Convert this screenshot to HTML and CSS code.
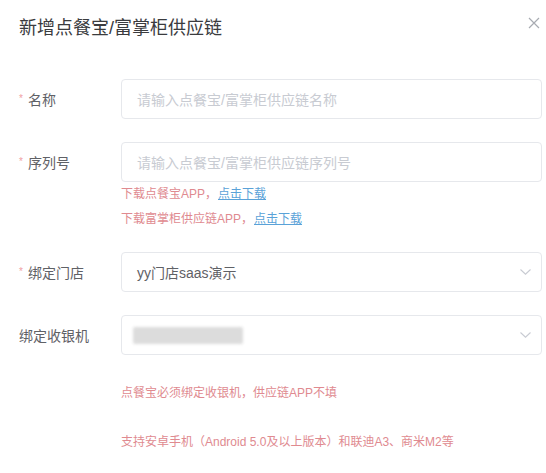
FILE: index.html
```html
<!DOCTYPE html>
<html lang="zh-CN">
<head>
<meta charset="utf-8">
<title>新增点餐宝/富掌柜供应链</title>
<link rel="stylesheet" href="styles.css">
</head>
<body>
<div class="dialog">
  <div class="header">
    <span class="title">新增点餐宝/富掌柜供应链</span>
    <button class="close" aria-label="关闭">
      <svg width="12" height="12" viewBox="0 0 12 12"><path d="M1 1L11 11M11 1L1 11" stroke="#a8abb2" stroke-width="1.2" fill="none"/></svg>
    </button>
  </div>
  <div class="form">
    <div class="row r1">
      <label class="label"><span class="req">*</span>名称</label>
      <div class="input"><span class="ph">请输入点餐宝/富掌柜供应链名称</span></div>
    </div>
    <div class="row r2">
      <label class="label"><span class="req">*</span>序列号</label>
      <div class="input"><span class="ph">请输入点餐宝/富掌柜供应链序列号</span></div>
    </div>
    <div class="help">
      <div>下载点餐宝APP，<a class="link" href="#">点击下载</a></div>
      <div>下载富掌柜供应链APP，<a class="link" href="#">点击下载</a></div>
    </div>
    <div class="row r3">
      <label class="label"><span class="req">*</span>绑定门店</label>
      <div class="input select"><span class="val">yy门店saas演示</span>
        <svg class="arrow" width="11" height="6" viewBox="0 0 11 6"><path d="M0.5 0.5L5.5 5.2L10.5 0.5" stroke="#c8cbd2" stroke-width="1.1" fill="none"/></svg>
      </div>
    </div>
    <div class="row r4">
      <label class="label">绑定收银机</label>
      <div class="input select"><span class="redact"></span>
        <svg class="arrow" width="11" height="6" viewBox="0 0 11 6"><path d="M0.5 0.5L5.5 5.2L10.5 0.5" stroke="#c8cbd2" stroke-width="1.1" fill="none"/></svg>
      </div>
    </div>
    <div class="note n1">点餐宝必须绑定收银机，供应链APP不填</div>
    <div class="note n2">支持安卓手机（Android 5.0及以上版本）和联迪A3、商米M2等</div>
  </div>
</div>
</body>
</html>
```
FILE: styles.css
```css
* { box-sizing: border-box; }
html, body {
  margin: 0;
  padding: 0;
  background: #fff;
}
body {
  font-family: "Liberation Sans", "Noto Sans CJK SC", sans-serif;
  width: 546px;
  height: 473px;
  overflow: hidden;
}
.dialog {
  display: flex;
  flex-direction: column;
}
.header {
  display: flex;
  justify-content: space-between;
  align-items: center;
  padding: 18px 6px 0 19px;
  height: 38px;
}
.title {
  font-size: 18px;
  line-height: 20px;
  color: #3a3b3e;
}
.close {
  border: 0;
  background: none;
  padding: 0;
  width: 12px;
  height: 12px;
  margin-top: -10px;
  display: flex;
}
.form {
  display: flex;
  flex-direction: column;
  padding: 41px 4px 0 18px;
}
.row {
  display: flex;
  align-items: center;
}
.r2 { margin-top: 23px; }
.r3 { margin-top: 20px; }
.r4 { margin-top: 23px; }
.label {
  width: 103px;
  flex: none;
  font-size: 14px;
  color: #5f6166;
  padding-left: 1px;
}
.req {
  color: #f0a0a4;
  font-size: 10px;
  margin-right: 5px;
  vertical-align: 3px;
}
.input {
  flex: 1;
  height: 40px;
  border: 1px solid #e6e8ec;
  border-radius: 4px;
  display: flex;
  align-items: center;
  padding: 0 15px;
  font-size: 14px;
}
.ph { color: #c8cbd2; }
.val { color: #5f6166; }
.select { justify-content: space-between; padding-right: 10px; }
.arrow { flex: none; }
.redact {
  display: block;
  width: 110px;
  height: 17px;
  margin-left: -4px;
  background: #dcdcdc;
  border-radius: 2px;
  filter: blur(1.5px);
}
.help {
  padding-left: 103px;
  font-size: 12px;
  line-height: 25px;
  color: #e08a90;
}
.link {
  color: #5aa2d8;
  text-decoration: underline;
  margin-left: 1px;
}
.note {
  padding-left: 103px;
  font-size: 12px;
  line-height: 20px;
  color: #e08a90;
}
.n1 { margin-top: 28px; }
.n2 { margin-top: 29px; }
```
